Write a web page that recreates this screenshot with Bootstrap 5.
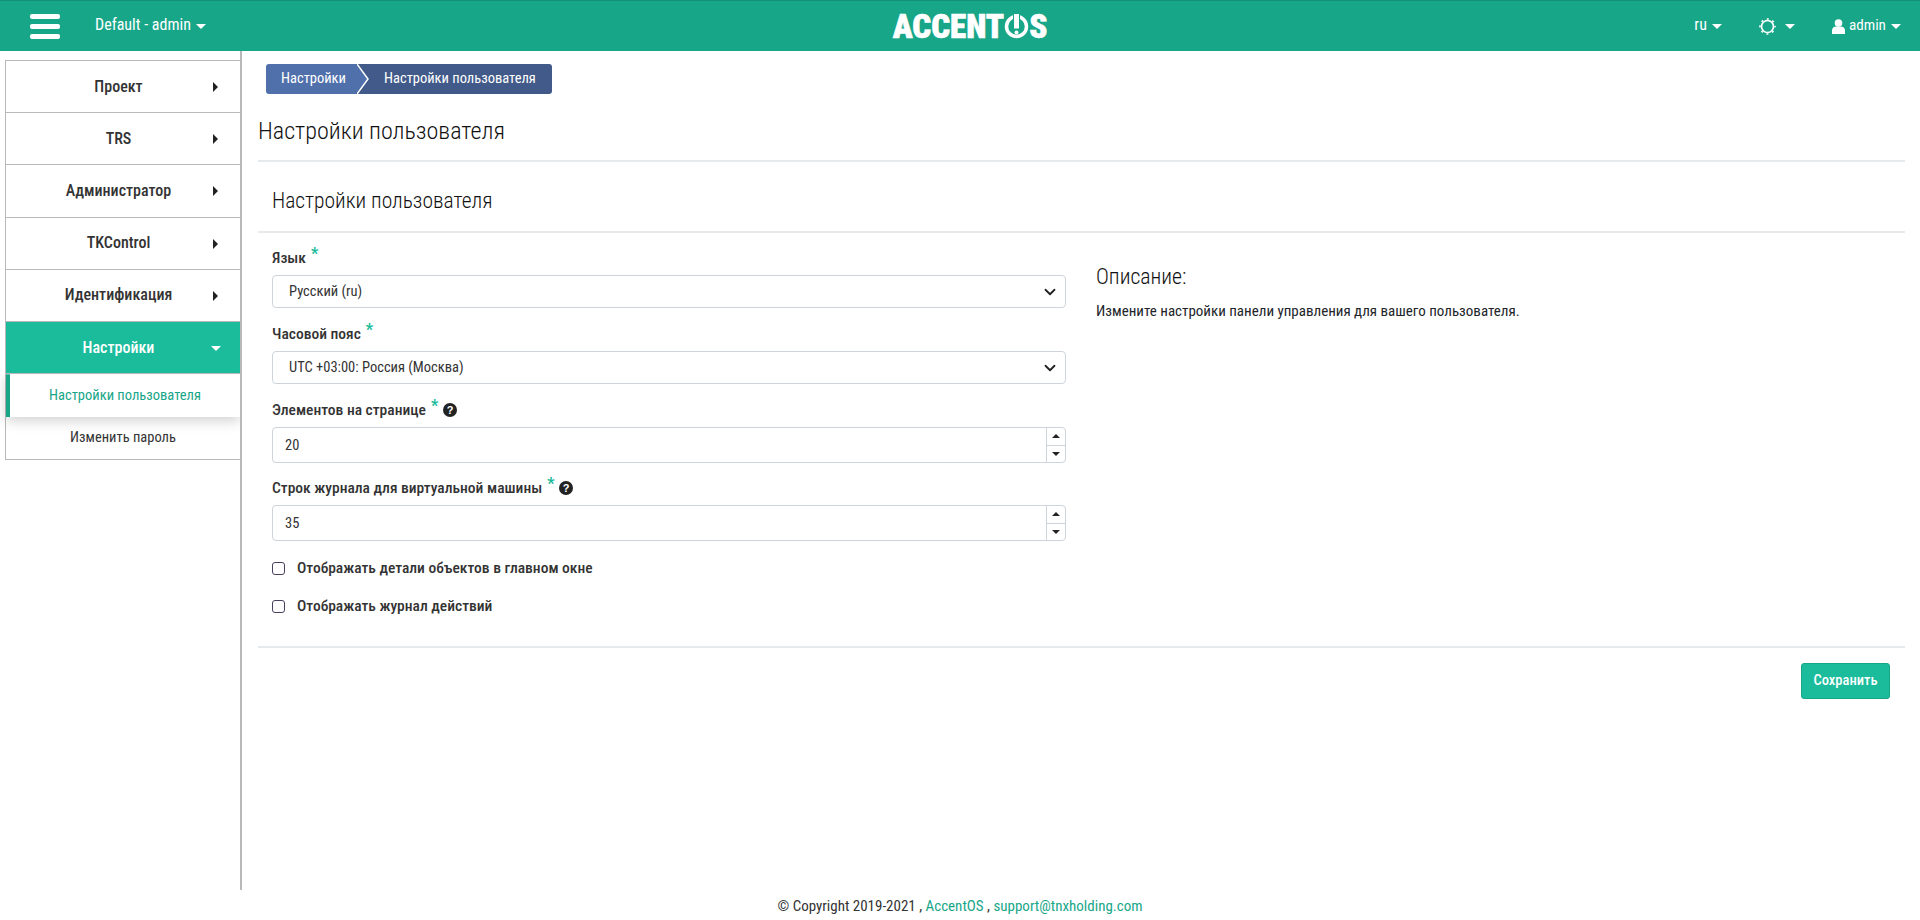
<!DOCTYPE html>
<html lang="ru">
<head>
    <meta charset="UTF-8">
    <meta name="viewport" content="width=device-width, initial-scale=1.0">
    <title>Настройки пользователя</title>
    <link href="https://cdn.jsdelivr.net/npm/bootstrap@5.3.0/dist/css/bootstrap.min.css" rel="stylesheet">
    <style>
        html, body { height: 100%; overflow: hidden; }
        body, input, select, button {
            font-family: "Roboto", "Liberation Sans", sans-serif;
            font-stretch: 75%;
        }
        body { font-size: 14.5px; color: #212529; }
        .page-wrap { height: 920px; }

        /* шапка */
        .top-bar { height: 51px; background: #18a689; border-top: 1px solid #149077; color: #fff; }
        .top-left { width: 620px; padding-left: 30px; }
        .top-right { width: 600px; padding-right: 19px; }
        .top-text { font-size: 16px; line-height: 20px; margin-bottom: 2px; }
        .top-user { font-size: 15.2px; }
        .burger { width: 30px; gap: 5px; margin-right: 35px; }
        .burger span { display: block; height: 5px; background: #fff; border-radius: 2px; }
        .tri-down { display: inline-block; width: 0; height: 0; border-left: 5px solid transparent; border-right: 5px solid transparent; border-top: 5px solid currentColor; }
        .gap-big { margin-left: 37px; }
        .gap-five { margin-left: 5px; }
        .gap-nine { margin-left: 9px; }
        .logo-text { font-weight: 900; font-size: 33px; font-stretch: 83%; line-height: 1; color: #fff; -webkit-text-stroke: .6px #fff; }

        /* боковое меню */
        .side-menu { width: 242px; padding: 9px 0 0 5px; border-right: 2px solid #b9b9b9; }
        .side-box { border: 1px solid #b9b9b9; border-right: 0; border-bottom: 0; }
        .side-item { height: 52.2px; padding-right: 9px; border-bottom: 1px solid #b9b9b9; font-size: 16px; font-weight: 500; color: #333; text-decoration: none; }
        .side-item.is-open { background: #1abc9c; color: #fff; }
        .tri-right { position: absolute; right: 22px; top: 21px; width: 0; height: 0; border-top: 5px solid transparent; border-bottom: 5px solid transparent; border-left: 5px solid #222; }
        .side-item .tri-down { position: absolute; right: 19px; top: 24px; }
        .side-sub { height: 43px; border-left: 4px solid #18a689; color: #18a689; background: #fff; box-shadow: 0 4px 12px rgba(0,0,0,.18); clip-path: inset(0 0 -20px -20px); text-decoration: none; position: relative; }
        .side-sub2 { height: 43px; border-bottom: 1px solid #b9b9b9; color: #333; text-decoration: none; }

        /* хлебные крошки */
        .crumbs { margin: 13px 0 0 8px; height: 30px; width: 286px; border-radius: 3px; overflow: hidden; color: #fff; white-space: nowrap; }
        .crumbs .breadcrumb-item { padding: 0; line-height: 30px; }
        .crumbs .breadcrumb-item::before { display: none; }
        .crumb-a { width: 91px; background: #5070ab; padding-left: 15px !important; }
        .crumb-b { flex: 1; background: #415a89; padding-left: 27px !important; color: #fff !important; }
        .crumb-arrow { position: absolute; left: 91px; top: 0; }

        /* контент */
        .main-part { padding: 0 15px 0 16px; }
        .page-title { font-size: 24.1px; font-weight: 300; line-height: 30px; margin: 22px 0 14px; color: #111; }
        .sep { height: 0; border-top: 2px solid #e7eaec; }
        .sub-title { font-size: 21.5px; font-weight: 300; line-height: 24px; margin: 27px 0 18px 14px; color: #111; }
        .form-side { width: 794px; margin-left: 14px; padding-bottom: 8px; }
        .form-side label, .chk-text { font-size: 15.5px; font-weight: 500; color: #333; }
        .field-label { line-height: 18px; margin: 0 0 8px; display: flex; }
        .star { color: #1abc9c; font-size: 16px; font-weight: 700; margin-left: 5px; line-height: 10px; }
        .help-mark { width: 14px; height: 14px; margin: 2px 0 0 5px; }
        .form-side .form-select, .form-side .form-control { font-size: 14.5px; color: #333; border-color: #ced4da; border-radius: 4px; }
        .form-side .form-select { height: 33px; padding: 0 36px 0 16px; margin-bottom: 17px; background-position: right 7px center; background-image: url("data:image/svg+xml,%3csvg xmlns='http://www.w3.org/2000/svg' viewBox='0 0 16 16'%3e%3cpath fill='none' stroke='%23222' stroke-linecap='round' stroke-linejoin='round' stroke-width='2.4' d='m2 5 6 6 6-6'/%3e%3c/svg%3e"); }
        .num-box { display: flex; height: 36px; border: 1px solid #ced4da; border-radius: 4px; margin-bottom: 16px; }
        .num-box .form-control { border: 0; height: 34px; padding: 0 12px; background: transparent; }
        .num-spin { width: 19px; border-left: 1px solid #ced4da; }
        .num-spin span { flex: 1; }
        .num-spin span + span { border-top: 1px solid #ced4da; }
        .tri-up-s { width: 0; height: 0; border-left: 4px solid transparent; border-right: 4px solid transparent; border-bottom: 4px solid #222; }
        .tri-down-s { width: 0; height: 0; border-left: 4px solid transparent; border-right: 4px solid transparent; border-top: 4px solid #222; }
        .chk-first { margin-top: 21px; }
        .chk-line { height: 13px; margin-bottom: 25px; gap: 12px; }
        .chk-line .form-check-input { width: 13px; height: 13px; margin: 0; border: 1px solid #4a3f5f; border-radius: 3px; }
        .descr-side { margin-left: 30px; padding-top: 16px; }
        .descr-side h5 { font-size: 21.8px; font-weight: 300; line-height: 24px; margin: 0 0 12px; color: #111; }
        .descr-side p { font-size: 15px; line-height: 20px; margin: 0; }
        .save-btn { width: 89px; height: 36px; padding: 0; margin: 15px 15px 0 0; background: #1abc9c; border: 1px solid #18a689; color: #fff; font-size: 14.5px; font-weight: 500; border-radius: 3px; }
        .foot-line { height: 30px; line-height: 32px; font-size: 15px; color: #333; }
        .foot-line a { color: #18a689; text-decoration: none; }
    </style>
</head>
<body>
<div class="page-wrap d-flex flex-column">
    <header class="top-bar d-flex align-items-center justify-content-between">
        <div class="top-left d-flex align-items-center">
            <div class="burger d-flex flex-column"><span></span><span></span><span></span></div>
            <span class="top-text">Default - admin</span>
            <span class="tri-down gap-five"></span>
        </div>
        <div class="logo-text d-flex align-items-center">ACCENT<svg width="25" height="25" viewBox="0 0 25 25"><circle cx="12.5" cy="12.5" r="10" fill="none" stroke="#fff" stroke-width="3.5"/><rect x="9.5" y="-1" width="6" height="16" fill="#fff" stroke="#18a689" stroke-width="1"/><circle cx="12.5" cy="18.5" r="2" fill="#fff"/></svg>S</div>
        <div class="top-right d-flex align-items-center justify-content-end">
            <span class="top-text">ru</span><span class="tri-down gap-five"></span>
            <svg class="gap-big" width="17" height="17" viewBox="0 0 17 17"><circle cx="8.5" cy="8.5" r="6" fill="none" stroke="#fff" stroke-width="1.7"/><circle cx="8.5" cy="8.5" r="7.5" fill="none" stroke="#fff" stroke-width="1.6" stroke-dasharray="2 3.89" stroke-dashoffset="1"/></svg>
            <span class="tri-down gap-nine"></span>
            <svg class="gap-big" width="13" height="15" viewBox="0 0 13 15"><circle cx="6.5" cy="4" r="3.8" fill="#fff"/><path d="M0 15v-3.5C0 9 2 7.5 4 7.5h5c2 0 4 1.5 4 4V15z" fill="#fff"/></svg>
            <span class="top-text top-user ms-1">admin</span><span class="tri-down gap-five"></span>
        </div>
    </header>

    <div class="d-flex flex-grow-1">
        <nav class="side-menu flex-shrink-0">
            <div class="side-box d-flex flex-column">
                <a class="side-item position-relative d-flex align-items-center justify-content-center" href="#">Проект<span class="tri-right"></span></a>
                <a class="side-item position-relative d-flex align-items-center justify-content-center" href="#">TRS<span class="tri-right"></span></a>
                <a class="side-item position-relative d-flex align-items-center justify-content-center" href="#">Администратор<span class="tri-right"></span></a>
                <a class="side-item position-relative d-flex align-items-center justify-content-center" href="#">TKControl<span class="tri-right"></span></a>
                <a class="side-item position-relative d-flex align-items-center justify-content-center" href="#">Идентификация<span class="tri-right"></span></a>
                <a class="side-item is-open position-relative d-flex align-items-center justify-content-center" href="#">Настройки<span class="tri-down"></span></a>
                <a class="side-sub d-flex align-items-center justify-content-center" href="#">Настройки пользователя</a>
                <a class="side-sub2 d-flex align-items-center justify-content-center" href="#">Изменить пароль</a>
            </div>
        </nav>

        <main class="main-part flex-grow-1">
            <ol class="breadcrumb crumbs d-flex position-relative mb-0">
                <li class="breadcrumb-item crumb-a">Настройки</li>
                <li class="breadcrumb-item crumb-b active">Настройки пользователя</li>
                <svg class="crumb-arrow" width="13" height="30" viewBox="0 0 13 30"><polygon points="0,0 11,15 0,30" fill="#5070ab"/><polyline points="0,0 11,15 0,30" fill="none" stroke="#fff" stroke-width="1.5"/></svg>
            </ol>
            <h1 class="page-title">Настройки пользователя</h1>
            <div class="sep"></div>
            <h2 class="sub-title">Настройки пользователя</h2>
            <div class="sep"></div>
            <div class="d-flex pt-3">
                <form class="form-side flex-shrink-0">
                    <label class="field-label">Язык <span class="star">*</span></label>
                    <select class="form-select"><option>Русский (ru)</option></select>
                    <label class="field-label">Часовой пояс <span class="star">*</span></label>
                    <select class="form-select"><option>UTC +03:00: Россия (Москва)</option></select>
                    <label class="field-label">Элементов на странице <span class="star">*</span>
                        <svg class="help-mark" viewBox="0 0 14 14"><circle cx="7" cy="7" r="7" fill="#222"/><text x="7" y="11" text-anchor="middle" font-size="11" font-weight="700" fill="#fff" font-family="Liberation Sans">?</text></svg></label>
                    <div class="num-box">
                        <input class="form-control" value="20">
                        <div class="num-spin d-flex flex-column flex-shrink-0">
                            <span class="d-flex align-items-center justify-content-center"><i class="tri-up-s"></i></span>
                            <span class="d-flex align-items-center justify-content-center"><i class="tri-down-s"></i></span>
                        </div>
                    </div>
                    <label class="field-label">Строк журнала для виртуальной машины <span class="star">*</span>
                        <svg class="help-mark" viewBox="0 0 14 14"><circle cx="7" cy="7" r="7" fill="#222"/><text x="7" y="11" text-anchor="middle" font-size="11" font-weight="700" fill="#fff" font-family="Liberation Sans">?</text></svg></label>
                    <div class="num-box">
                        <input class="form-control" value="35">
                        <div class="num-spin d-flex flex-column flex-shrink-0">
                            <span class="d-flex align-items-center justify-content-center"><i class="tri-up-s"></i></span>
                            <span class="d-flex align-items-center justify-content-center"><i class="tri-down-s"></i></span>
                        </div>
                    </div>
                    <div class="chk-line chk-first d-flex align-items-center"><input class="form-check-input" type="checkbox"><span class="chk-text">Отображать детали объектов в главном окне</span></div>
                    <div class="chk-line d-flex align-items-center"><input class="form-check-input" type="checkbox"><span class="chk-text">Отображать журнал действий</span></div>
                </form>
                <div class="descr-side">
                    <h5>Описание:</h5>
                    <p>Измените настройки панели управления для вашего пользователя.</p>
                </div>
            </div>
            <div class="sep"></div>
            <div class="d-flex justify-content-end">
                <button class="btn save-btn" type="button">Сохранить</button>
            </div>
        </main>
    </div>

    <footer class="foot-line text-center">© Copyright 2019-2021 , <a href="#">AccentOS</a> , <a href="#">support@tnxholding.com</a></footer>
</div>
</body>
</html>
